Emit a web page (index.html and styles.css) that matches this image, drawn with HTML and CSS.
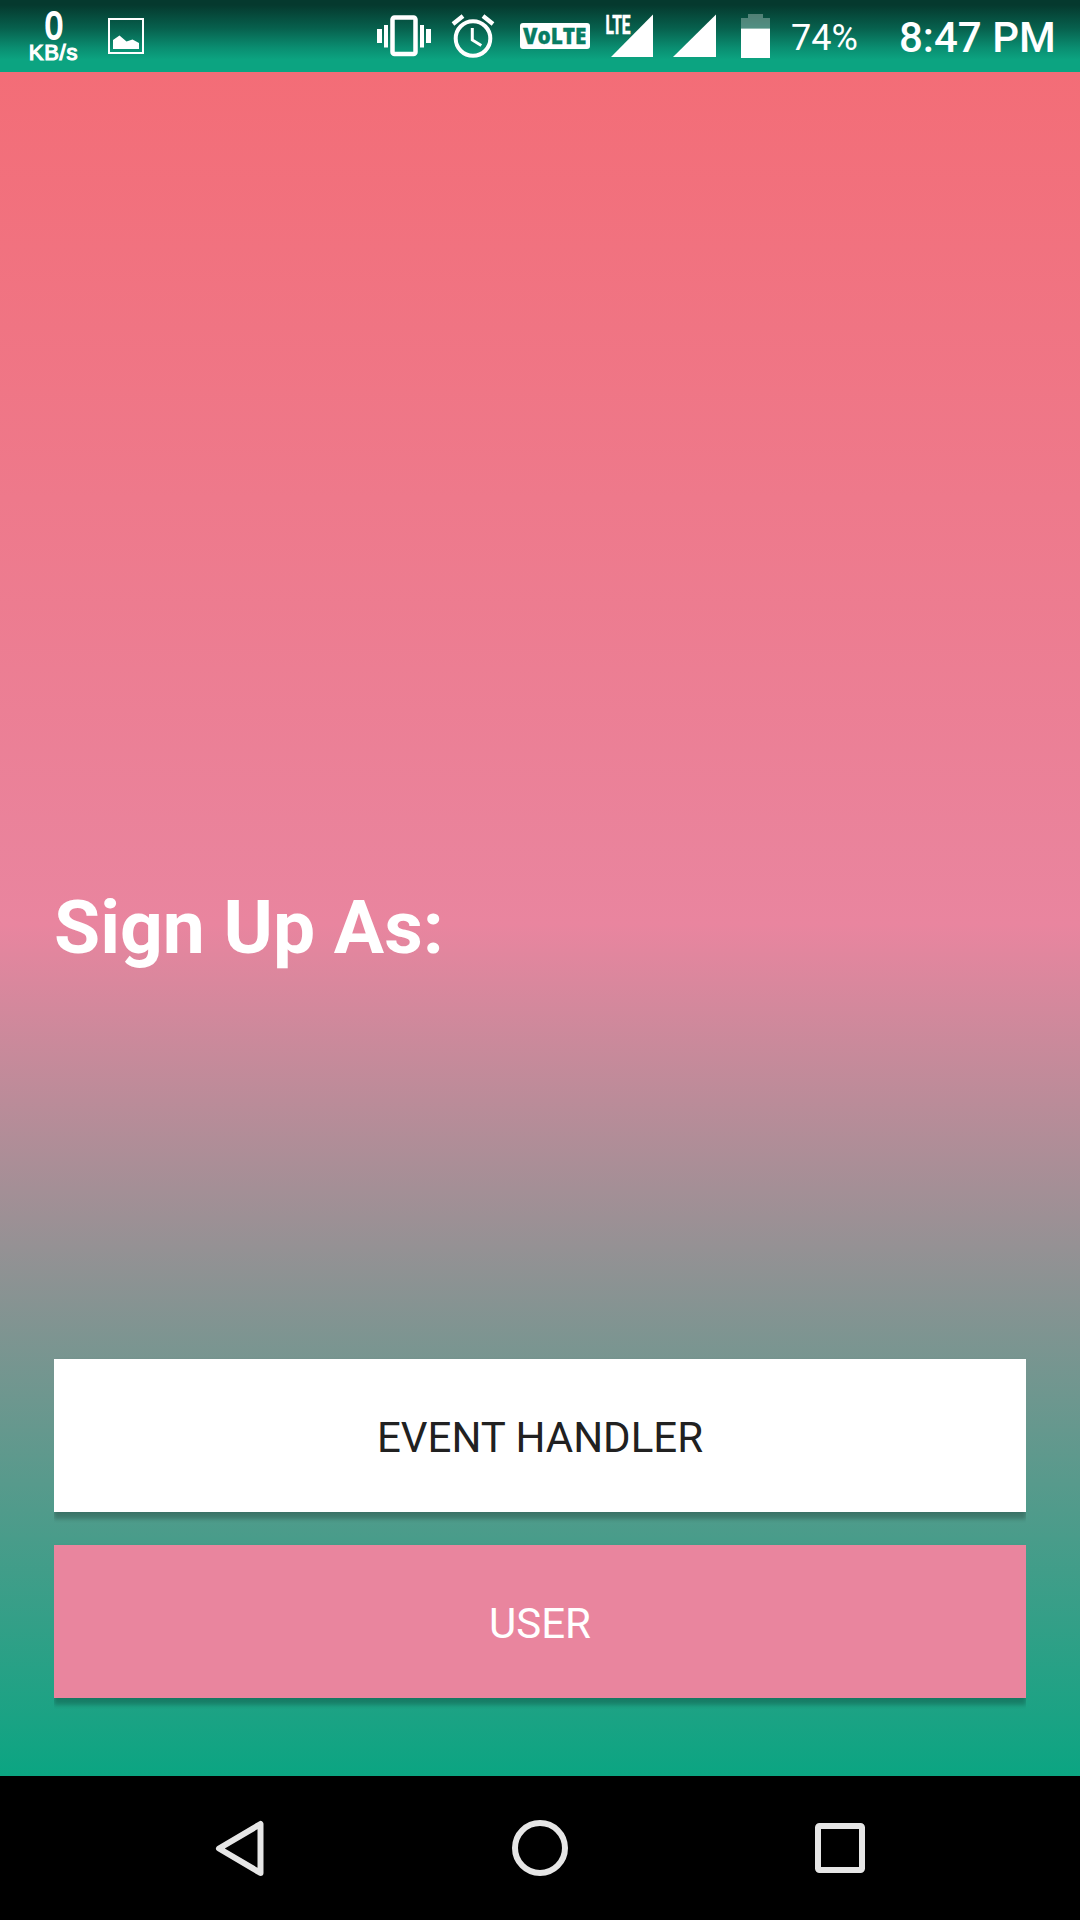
FILE: index.html
```html
<!DOCTYPE html>
<html lang="en">
<head>
<meta charset="utf-8">
<title>Sign Up</title>
<link rel="stylesheet" href="styles.css">
</head>
<body>
<div class="screen">
  <header class="status">
    <div class="net"><span class="net-value">0</span><span class="net-unit">KB/s</span></div>
    <svg class="icon picture" width="36" height="72" viewBox="0 0 36 72"><rect x="1" y="19" width="34" height="34" fill="none" stroke="#fff" stroke-width="2"/><path d="M5 49V40L11.500 35.500L18.500 41.500L24.500 39.500L31 43V49Z" fill="#fff"/></svg>
    <div class="tray">
      <svg class="icon" width="54" height="72" viewBox="0 0 54 72"><path d="M0 29h5v14H0zM7 25h4v22.500H7zM43 25h4v22.500H43zM49 29h5v14H49z" fill="#fff"/><rect x="15.500" y="17.500" width="23" height="36.500" rx="2" fill="none" stroke="#fff" stroke-width="4.500"/></svg>
      <svg class="icon alarm" width="42" height="72" viewBox="0 0 42 72" fill="none" stroke="#fff"><circle cx="21" cy="38.500" r="17.300" stroke-width="4"/><path d="M20.300 28v12l9 5.500" stroke-width="3"/><path d="M1 24L11 16M31 16l10 8" stroke-width="4.300"/></svg>
      <svg class="icon volte" width="70" height="72" viewBox="0 0 70 72"><rect y="23" width="70" height="26" rx="3" fill="#fff"/><text x="3" y="43.900" textLength="63.500" lengthAdjust="spacingAndGlyphs">VoLTE</text></svg>
      <svg class="icon lte" width="47" height="72" viewBox="0 0 47 72"><path d="M5 57L47 14.500V57Z" fill="#fff"/><text x="-.5" y="33.500" textLength="25" lengthAdjust="spacingAndGlyphs">LTE</text></svg>
      <svg class="icon signal" width="43" height="72" viewBox="0 0 43 72"><path d="M0 57L43 14.500V57Z" fill="#fff"/></svg>
      <svg class="icon battery" width="29" height="72" viewBox="0 0 29 72"><path d="M7 14h15v4h7v10.500H0V18h7z" fill="#fff" fill-opacity=".3"/><path d="M0 28.500h29V58H0z" fill="#fff"/></svg>
      <span class="percent">74%</span>
      <span class="clock">8:47 PM</span>
    </div>
  </header>
  <main class="content">
    <h1 class="title">Sign Up As:</h1>
    <div class="actions">
      <button class="button handler">EVENT HANDLER</button>
      <button class="button user">USER</button>
    </div>
  </main>
  <nav class="nav">
    <svg width="60" height="60" viewBox="0 0 60 60"><path d="M9 30.500L50.500 6V55Z"/></svg>
    <svg width="60" height="60" viewBox="0 0 60 60"><circle cx="30" cy="30" r="25"/></svg>
    <svg width="60" height="60" viewBox="0 0 60 60"><rect x="8" y="8" width="44" height="44" rx="1.500"/></svg>
  </nav>
</div>
</body>
</html>
```
FILE: styles.css
```css
* {
  box-sizing: border-box;
}

body {
  margin: 0;
  font-family: Roboto, sans-serif;
}

.screen {
  display: flex;
  flex-direction: column;
  width: 1080px;
  height: 1920px;
  overflow: hidden;
}

.status {
  display: flex;
  height: 72px;
  padding: 0 26px 0 28px;
  color: #fff;
  background: linear-gradient(#05392e 0, #05392e 5px, #07604d 28px, #0a8e71 48px, #0ca481 60px, #0ca481 100%);
}

.icon {
  flex: none;
  overflow: visible;
}

.net {
  display: flex;
  flex-direction: column;
  align-items: center;
  width: 51px;
  padding-top: 8px;
  font-family: "Liberation Sans", sans-serif;
}

.net-value {
  font-size: 39px;
  line-height: 36px;
  -webkit-text-stroke: 2px #fff;
  transform: scaleX(.82);
}

.net-unit {
  font-size: 22px;
  font-weight: 400;
  line-height: 20px;
  margin-top: -1px;
  -webkit-text-stroke: 1.2px #fff;
  letter-spacing: .8px;
}

.picture {
  margin-left: 29px;
}

.tray {
  display: flex;
  margin-left: auto;
}

.alarm {
  margin-left: 21px;
}

.volte {
  margin-left: 26px;
}

.volte text {
  font: 800 23.5px "Open Sans", sans-serif;
  fill: #087c63;
  stroke: #087c63;
  stroke-width: .3px;
}

.lte {
  margin-left: 16px;
}

.lte text {
  font: 700 26px Roboto, sans-serif;
  fill: #fff;
  stroke: #fff;
  stroke-width: .6px;
}

.signal {
  margin-left: 20px;
}

.battery {
  margin-left: 25px;
}

.percent {
  width: 108px;
  margin-left: 21px;
  font-size: 36px;
  line-height: 76px;
}

.clock {
  width: 155px;
  font-size: 42px;
  font-weight: 500;
  line-height: 76px;
  white-space: nowrap;
}

.content {
  display: flex;
  flex: 1;
  flex-direction: column;
  justify-content: space-between;
  padding: 811px 54px 78px;
  background: linear-gradient(#f36d77, #e9859f 50%, #0ba582);
}

.title {
  margin: 0;
  color: #fff;
  font-size: 75px;
  font-weight: 700;
  line-height: 88px;
}

.actions {
  display: flex;
  flex-direction: column;
  gap: 33px;
}

.button {
  height: 153px;
  padding: 4px 0 0;
  border: 0;
  font: 400 42px Roboto, sans-serif;
  box-shadow: 0 7px 4px rgba(0, 0, 0, .22), 0 1px 3px rgba(0, 0, 0, .08);
  clip-path: inset(-2px 0 -14px);
}

.handler {
  color: #212121;
  background: #fff;
}

.user {
  color: #fff;
  background: #e9859e;
}

.nav {
  display: flex;
  align-items: center;
  justify-content: space-between;
  height: 144px;
  padding: 0 210px;
  background: #000;
}

.nav svg {
  fill: none;
  stroke: #e6e6e6;
  stroke-width: 6px;
  stroke-linejoin: round;
}
```
